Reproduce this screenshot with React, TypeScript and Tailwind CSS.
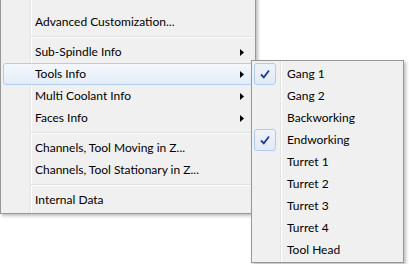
import React from "react";

const font = { fontFamily: 'Lato, "Open Sans", sans-serif' };

function Arrow() {
  return (
    <svg width="4" height="7" viewBox="0 0 4 7" className="ml-auto mr-[8px] shrink-0">
      <path d="M0 0 L4 3.5 L0 7 Z" fill="#000" />
    </svg>
  );
}

function Item({ label, arrow, active }: { label: string; arrow?: boolean; active?: boolean }) {
  return (
    <div
      className={
        "h-[22px] flex items-center pl-[31px] text-[12px] text-black " +
        (active
          ? "rounded-[3px] border border-[#b0cdf0] bg-gradient-to-b from-[#f4f8fd] to-[#e3ecf8]"
          : "border border-transparent")
      }
    >
      <span className="leading-none">{label}</span>
      {arrow && <Arrow />}
    </div>
  );
}

function Sep() {
  return <div className="mt-[3px] mb-[3px] ml-[28px] mr-[1px] h-[2px] border-t border-t-[#e0e0e0] border-b border-b-white" />;
}

function Check() {
  return (
    <div className="ml-[2px] w-[22px] h-[22px] shrink-0 rounded-[3px] border border-[#b0cdf0] bg-gradient-to-b from-[#eef3fb] to-[#e2eaf7] flex items-center justify-center">
      <svg width="12" height="12" viewBox="0 0 12 12">
        <path d="M2 6.5 L4.8 9.3 L10 2.5" stroke="#1d3a9c" strokeWidth="1.8" fill="none" />
      </svg>
    </div>
  );
}

function SubItem({ label, checked }: { label: string; checked?: boolean }) {
  return (
    <div className="h-[22px] flex items-center text-[12px] text-black">
      {checked ? <Check /> : <div className="ml-[2px] w-[22px] shrink-0" />}
      <span className="ml-[11px] leading-none">{label}</span>
    </div>
  );
}

export default function App() {
  return (
    <div className="relative w-[409px] h-[264px] bg-white overflow-hidden" style={font}>
      {/* main menu */}
      <div className="absolute left-0 top-[-10px] w-[256px] h-[224px] border border-[#979797] bg-[#f0f0f0] shadow-[2px_2px_3px_rgba(0,0,0,0.25)]">
        <div className="absolute left-[29px] top-0 bottom-0 w-[2px] border-l border-l-[#e2e3e3] border-r border-r-white" />
        <div className="relative flex flex-col pt-[20px] px-[2px]">
          <Item label="Advanced Customization..." />
          <Sep />
          <Item label="Sub-Spindle Info" arrow />
          <Item label="Tools Info" arrow active />
          <Item label="Multi Coolant Info" arrow />
          <Item label="Faces Info" arrow />
          <Sep />
          <Item label="Channels, Tool Moving in Z..." />
          <Item label="Channels, Tool Stationary in Z..." />
          <Sep />
          <Item label="Internal Data" />
        </div>
      </div>
      {/* submenu */}
      <div className="absolute left-[251px] top-[60px] w-[153px] h-[203px] border border-[#979797] bg-[#f0f0f0] shadow-[2px_2px_3px_rgba(0,0,0,0.25)]">
        <div className="absolute left-[28px] top-0 bottom-0 w-[2px] border-l border-l-[#e2e3e3] border-r border-r-white" />
        <div className="relative flex flex-col pt-[2px]">
          <SubItem label="Gang 1" checked />
          <SubItem label="Gang 2" />
          <SubItem label="Backworking" />
          <SubItem label="Endworking" checked />
          <SubItem label="Turret 1" />
          <SubItem label="Turret 2" />
          <SubItem label="Turret 3" />
          <SubItem label="Turret 4" />
          <SubItem label="Tool Head" />
        </div>
      </div>
    </div>
  );
}
